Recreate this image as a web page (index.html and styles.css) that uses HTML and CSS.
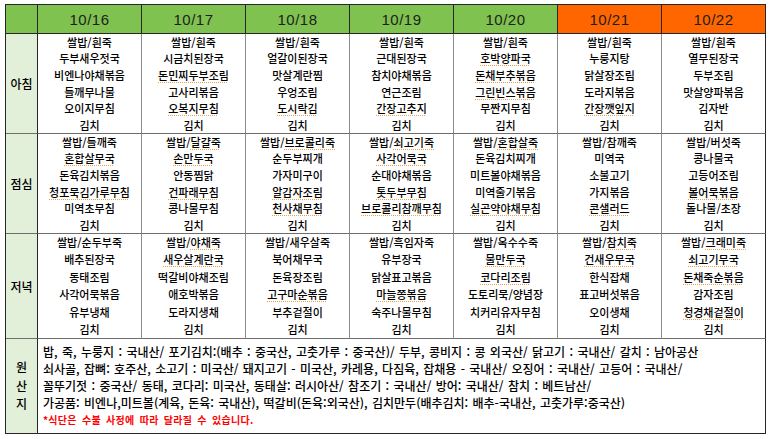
FILE: index.html
```html
<!DOCTYPE html>
<html lang="ko">
<head>
<meta charset="utf-8">
<title>주간 식단표</title>
<link rel="stylesheet" href="styles.css">
</head>
<body>
<div class="menu">
  <div class="cell corner"></div>
  <div class="cell day">10/16</div>
  <div class="cell day">10/17</div>
  <div class="cell day">10/18</div>
  <div class="cell day">10/19</div>
  <div class="cell day">10/20</div>
  <div class="cell day weekend">10/21</div>
  <div class="cell day weekend">10/22</div>

  <div class="cell label">아침</div>
  <div class="cell meal tight"><span>쌀밥/흰죽</span><span>두부새우젓국</span><span>비엔나야채볶음</span><span>들깨무나물</span><span>오이지무침</span><span>김치</span></div>
  <div class="cell meal tight"><span>쌀밥/흰죽</span><span>시금치된장국</span><span class="sp">돈민찌두부조림</span><span>고사리볶음</span><span class="sp">오복지무침</span><span>김치</span></div>
  <div class="cell meal tight"><span>쌀밥/흰죽</span><span>얼갈이된장국</span><span>맛살계란찜</span><span>우엉조림</span><span class="sp">도시락김</span><span>김치</span></div>
  <div class="cell meal tight"><span>쌀밥/흰죽</span><span>근대된장국</span><span>참치야채볶음</span><span>연근조림</span><span class="sp">간장고추지</span><span>김치</span></div>
  <div class="cell meal tight"><span>쌀밥/흰죽</span><span class="sp">호박양파국</span><span class="sp">돈채부추볶음</span><span class="sp">그린빈스볶음</span><span>무짠지무침</span><span>김치</span></div>
  <div class="cell meal tight"><span>쌀밥/흰죽</span><span>누룽지탕</span><span>닭살장조림</span><span>도라지볶음</span><span class="sp">간장깻잎지</span><span>김치</span></div>
  <div class="cell meal tight"><span>쌀밥/흰죽</span><span>열무된장국</span><span>두부조림</span><span>맛살양파볶음</span><span>김자반</span><span>김치</span></div>

  <div class="cell label">점심</div>
  <div class="cell meal tight"><span>쌀밥/들깨죽</span><span class="sp">혼합살무국</span><span>돈육김치볶음</span><span class="sp">청포묵김가루무침</span><span>미역초무침</span><span>김치</span></div>
  <div class="cell meal tight"><span>쌀밥/<i class="sp">달걀죽</i></span><span class="sp">손만두국</span><span>안동찜닭</span><span class="sp">건파래무침</span><span>콩나물무침</span><span>김치</span></div>
  <div class="cell meal tight"><span>쌀밥/<i class="sp">브로콜리죽</i></span><span>순두부찌개</span><span>가자미구이</span><span class="sp">알감자조림</span><span class="sp">천사채무침</span><span>김치</span></div>
  <div class="cell meal tight"><span>쌀밥/<i class="sp">쇠고기죽</i></span><span class="sp">사각어묵국</span><span>순대야채볶음</span><span class="sp">톳두부무침</span><span class="sp">브로콜리참깨무침</span><span>김치</span></div>
  <div class="cell meal tight"><span>쌀밥/<i class="sp">혼합살죽</i></span><span>돈육김치찌개</span><span>미트볼야채볶음</span><span>미역줄기볶음</span><span class="sp">실곤약야채무침</span><span>김치</span></div>
  <div class="cell meal tight"><span>쌀밥/참깨죽</span><span>미역국</span><span>소불고기</span><span>가지볶음</span><span class="sp">콘샐러드</span><span>김치</span></div>
  <div class="cell meal tight"><span>쌀밥/버섯죽</span><span>콩나물국</span><span>고등어조림</span><span class="sp">볼어묵볶음</span><span>돌나물/초장</span><span>김치</span></div>

  <div class="cell label">저녁</div>
  <div class="cell meal"><span>쌀밥/순두부죽</span><span>배추된장국</span><span>동태조림</span><span>사각어묵볶음</span><span>유부냉채</span><span>김치</span></div>
  <div class="cell meal"><span>쌀밥/<i class="sp">야채죽</i></span><span class="sp">새우살계란국</span><span>떡갈비야채조림</span><span>애호박볶음</span><span>도라지생채</span><span>김치</span></div>
  <div class="cell meal"><span>쌀밥/새우살죽</span><span>북어채무국</span><span>돈육장조림</span><span class="sp">고구마순볶음</span><span>부추겉절이</span><span>김치</span></div>
  <div class="cell meal"><span>쌀밥/흑임자죽</span><span>유부장국</span><span>닭살표고볶음</span><span class="sp">마늘쫑볶음</span><span>숙주나물무침</span><span>김치</span></div>
  <div class="cell meal"><span>쌀밥/옥수수죽</span><span class="sp">물만두국</span><span class="sp">코다리조림</span><span>도토리묵/양념장</span><span>치커리유자무침</span><span>김치</span></div>
  <div class="cell meal"><span>쌀밥/<i class="sp">참치죽</i></span><span class="sp">건새우무국</span><span>한식잡채</span><span>표고버섯볶음</span><span>오이생채</span><span>김치</span></div>
  <div class="cell meal"><span>쌀밥/<i class="sp">크래미죽</i></span><span class="sp">쇠고기무국</span><span class="sp">돈채죽순볶음</span><span>감자조림</span><span class="sp">청경채겉절이</span><span>김치</span></div>

  <div class="cell label origin-label"><span>원</span><span>산</span><span>지</span></div>
  <div class="cell origin">
    <p>밥, 죽, 누룽지 : 국내산/ 포기김치:(배추 : 중국산, 고춧가루 : 중국산)/ 두부, 콩비지 : 콩 외국산/ 닭고기 : 국내산/ 갈치 : 남아공산</p>
    <p>쇠사골, 잡뼈: 호주산, 소고기 : 미국산/ 돼지고기 - 미국산, 카레용, 다짐육, 잡채용 - 국내산/ 오징어 : 국내산/ 고등어 : 국내산/</p>
    <p>꼴뚜기젓 : 중국산/ 동태, 코다리: 미국산, 동태살: 러시아산/ 참조기 : 국내산/ 방어: 국내산/ 참치 : 베트남산/</p>
    <p>가공품: 비엔나,미트볼(계육, 돈육: 국내산), 떡갈비(돈육:외국산), 김치만두(배추김치: 배추-국내산, 고춧가루:중국산)</p>
    <p class="note">*식단은 수불 사정에 따라 달라질 수 있습니다.</p>
  </div>
</div>
</body>
</html>
```

FILE: styles.css
```css
* { box-sizing: border-box; }
html, body { margin: 0; padding: 0; background: #fff; }
body {
  font-family: "Noto Sans CJK KR", "Noto Sans", sans-serif;
  color: #000;
}
.menu {
  margin: 4px 0 0 5px;
  width: 761px;
  display: grid;
  grid-template-columns: 32px repeat(7, 104px);
  grid-template-rows: 29px 100px 100px 105px 95px;
  border-left: 1px solid #262626;
  border-top: 1px solid #262626;
}
.cell {
  border-right: 1px solid #8c8c8c;
  border-bottom: 1px solid #6e6e6e;
  min-width: 0;
}
.corner { background: #7fc24f; border-right-color: #262626; border-bottom-color: #262626; }
.day {
  background: #7fc24f;
  border-right-color: #262626;
  border-bottom-color: #262626;
  display: flex;
  align-items: center;
  justify-content: center;
  font-family: "Liberation Sans", "Noto Sans", sans-serif;
  font-size: 15px;
  font-weight: 400;
  color: #1e1e1e;
  letter-spacing: 0.5px;
  padding-top: 1px;
}
.weekend { background: #ff6600; }
.meal:nth-child(8n), .origin { border-right-color: #262626; }
.label {
  background: #e2efd9;
  display: flex;
  align-items: center;
  justify-content: center;
  font-size: 12px;
  font-weight: 500;
  border-right-color: #262626;
}
.origin-label {
  flex-direction: column;
  line-height: 18.5px;
  border-bottom-color: #262626;
}
.meal {
  display: flex;
  flex-direction: column;
  align-items: center;
  justify-content: center;
  font-size: 11px;
  font-weight: 500;
  line-height: 17.5px;
  white-space: nowrap;
}
.meal.tight { line-height: 16.6px; }
.meal span { display: block; }
.meal i { font-style: normal; }
.sp {
  text-decoration: underline dotted #f0a040;
  text-decoration-thickness: 1px;
  text-underline-offset: 2px;
}
.origin {
  grid-column: 2 / 9;
  padding: 4px 0 0 5px;
  font-size: 12px;
  font-weight: 500;
  line-height: 17px;
  word-spacing: 1px;
  white-space: nowrap;
  border-bottom-color: #262626;
}
.origin p { margin: 0; }
.note {
  color: #ff0000;
  font-size: 10px;
  font-weight: 700;
  letter-spacing: 0.3px;
  word-spacing: 2px;
}
```
